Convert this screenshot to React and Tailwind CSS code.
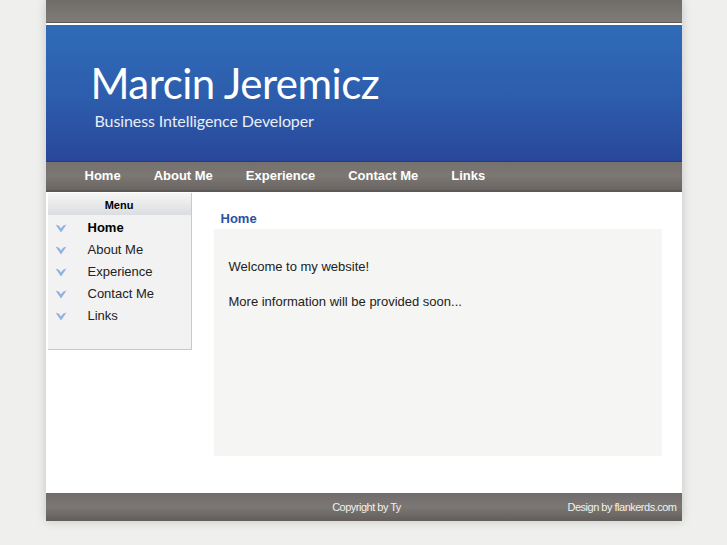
const navItems = ["Home", "About Me", "Experience", "Contact Me", "Links"];

const Arrow = () => (
  <svg width="12" height="9" viewBox="0 0 12 9" className="shrink-0">
    <path d="M0.5 0.5 L4 1.8 L6 4.5 L8 1.8 L11.5 0.5 L6 8.5 Z" fill="#8fb1df" />
  </svg>
);

const App = () => {
  return (
    <div
      className="min-h-[545px] w-full bg-[#efefed] pb-[24px]"
      style={{ fontFamily: '"Liberation Sans", Arial, sans-serif' }}
    >
      <div className="mx-auto w-[636px] shadow-[0_0_10px_rgba(0,0,0,0.18)]">

        <div className="h-[23px] bg-gradient-to-b from-[#6f6b68] to-[#807c78] border-b border-[#5e5a57]" />

        <div className="h-[2px] bg-white" />

        <div className="h-[137px] bg-gradient-to-b from-[#2f6cb8] via-[#2d5eae] to-[#29479a] pl-[45px] pt-[34px] border-b border-[#243c80]">
          <div
            className="text-white text-[42px] leading-[48px] tracking-[-0.5px]"
            style={{ fontFamily: 'Lato, "Open Sans", sans-serif' }}
          >
            Marcin Jeremicz
          </div>
          <div
            className="text-[#e8eef8] text-[16px] leading-[20px] mt-[4px] pl-[4px] tracking-[-0.1px]"
            style={{ fontFamily: 'Lato, "Open Sans", sans-serif' }}
          >
            Business Intelligence Developer
          </div>
        </div>

        <div className="h-[30px] bg-gradient-to-b from-[#76716e] via-[#7b7773] to-[#6a6562] border-b-2 border-[#5c5855] flex items-center pl-[39px] gap-[33px]">
          {navItems.map((item) => (
            <span key={item} className="text-white font-bold text-[13px]">
              {item}
            </span>
          ))}
        </div>

        <div className="h-[301px] bg-white flex">
          <div className="ml-[2px] mt-[1px] w-[144px] h-[157px] bg-[#f2f2f2] border-r border-b border-[#c9c9c9]">
            <div className="h-[22px] pt-[2px] bg-gradient-to-b from-[#f6f6f6] to-[#dcdde0] flex items-center justify-center text-[11px] font-bold text-black">
              Menu
            </div>
            <div className="flex flex-col pt-[2px]">
              {navItems.map((item, i) => (
                <div key={item} className="h-[22px] flex items-center pl-[7px] gap-[21px]">
                  <Arrow />
                  <span
                    className={
                      i === 0
                        ? "text-[13px] font-bold text-black"
                        : "text-[13px] text-[#222]"
                    }
                  >
                    {item}
                  </span>
                </div>
              ))}
            </div>
          </div>

          <div className="flex-1 pl-[22px] pr-[20px]">
            <div className="h-[37px] pt-[18px] pl-[7px] text-[13px] font-bold text-[#2b52a3] leading-[18px]">
              Home
            </div>
            <div className="h-[227px] bg-[#f5f5f4] pl-[15px] pt-[29px] text-[13px] text-[#222]">
              <p className="leading-[18px]">Welcome to my website!</p>
              <p className="leading-[18px] mt-[17px]">More information will be provided soon...</p>
            </div>
          </div>
        </div>

        <div className="h-[28px] bg-gradient-to-b from-[#726c6c] via-[#7a7774] to-[#625d5b] flex items-center relative text-[11px] tracking-[-0.5px] text-[#f0f0f0]">
          <span className="mx-auto pl-[6px]">Copyright by Ty</span>
          <span className="absolute right-[5px]">Design by flankerds.com</span>
        </div>

      </div>
    </div>
  );
};

export default App;
